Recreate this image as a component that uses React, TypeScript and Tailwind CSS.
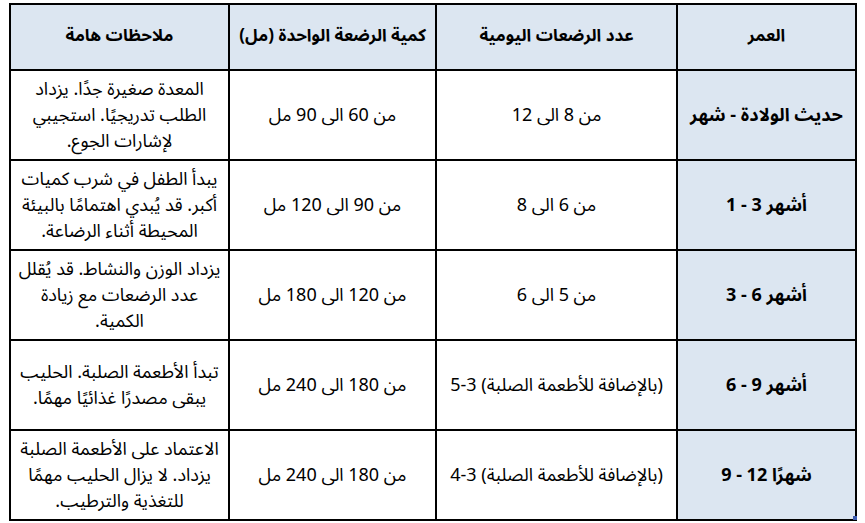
import React from 'react';

const rows = [
  {
    age: 'حديث الولادة - شهر',
    count: 'من 8 الى 12',
    amount: 'من 60 الى 90 مل',
    notes: 'المعدة صغيرة جدًا. يزداد الطلب تدريجيًا. استجيبي لإشارات الجوع.',
  },
  {
    age: 'أشهر 3 - 1',
    count: 'من 6 الى 8',
    amount: 'من 90 الى 120 مل',
    notes: 'يبدأ الطفل في شرب كميات أكبر. قد يُبدي اهتمامًا بالبيئة المحيطة أثناء الرضاعة.',
  },
  {
    age: 'أشهر 6 - 3',
    count: 'من 5 الى 6',
    amount: 'من 120 الى 180 مل',
    notes: 'يزداد الوزن والنشاط. قد يُقلل عدد الرضعات مع زيادة الكمية.',
  },
  {
    age: 'أشهر 9 - 6',
    count: '(بالإضافة للأطعمة الصلبة) 3-5',
    amount: 'من 180 الى 240 مل',
    notes: 'تبدأ الأطعمة الصلبة. الحليب يبقى مصدرًا غذائيًا مهمًا.',
  },
  {
    age: 'شهرًا 12 - 9',
    count: '(بالإضافة للأطعمة الصلبة) 3-4',
    amount: 'من 180 الى 240 مل',
    notes: 'الاعتماد على الأطعمة الصلبة يزداد. لا يزال الحليب مهمًا للتغذية والترطيب.',
  },
];

export default function App() {
  return (
    <div
      className="w-[865px] h-[523px] bg-white overflow-hidden pt-[3px] pl-[9px]"
      style={{ fontFamily: '"Noto Sans Arabic", "Liberation Sans", "DejaVu Sans", sans-serif' }}
    >
      <div className="relative w-fit">
        <table dir="rtl" className="border-collapse text-[18px] text-black">
          <colgroup>
            <col className="w-[179px]" />
            <col className="w-[241px]" />
            <col className="w-[207px]" />
            <col className="w-[219px]" />
          </colgroup>
          <thead>
            <tr className="h-[66px] bg-[#dce6f1]">
              <th className="border-2 border-black font-bold text-[17px]">العمر</th>
              <th className="border-2 border-black font-bold text-[17px]">عدد الرضعات اليومية</th>
              <th className="border-2 border-black font-bold text-[17px]">كمية الرضعة الواحدة (مل)</th>
              <th className="border-2 border-black font-bold text-[17px]">ملاحظات هامة</th>
            </tr>
          </thead>
          <tbody>
            {rows.map((r) => (
              <tr key={r.age} className="h-[90px]">
                <td className="border-2 border-black bg-[#dce6f1] text-center font-bold">{r.age}</td>
                <td className="border-2 border-black text-center">{r.count}</td>
                <td className="border-2 border-black text-center">{r.amount}</td>
                <td className="border-2 border-black text-center px-1.5 leading-[26px]">{r.notes}</td>
              </tr>
            ))}
          </tbody>
        </table>
        {/* fill handle */}
        <span className="absolute right-[0px] bottom-[1px] w-[4px] h-[4px] bg-[#3d5cb0]" />
      </div>
    </div>
  );
}
